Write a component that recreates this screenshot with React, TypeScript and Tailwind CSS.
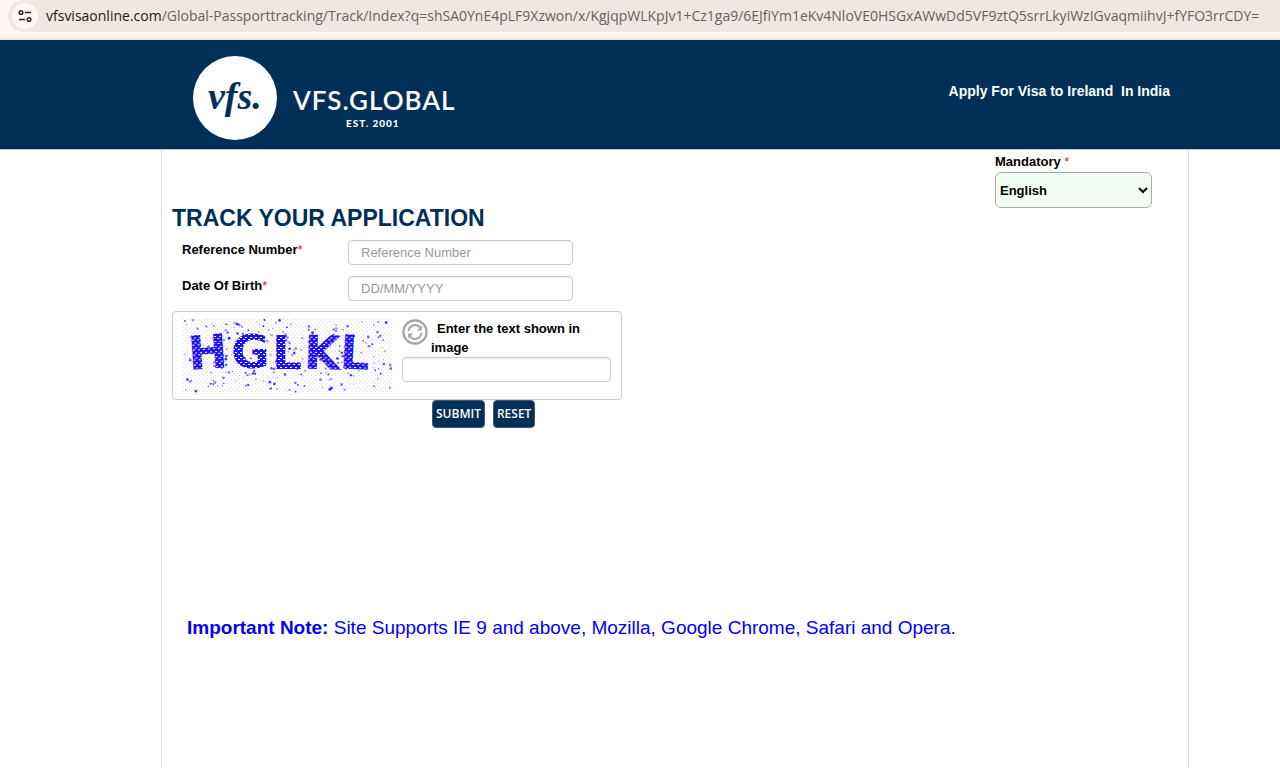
import { useState } from "react";
import type { FormEvent } from "react";

interface Speck {
    x: number;
    y: number;
    r: number;
    o: number;
}

const CAPTCHA_LETTERS = [
    { char: "H", x: 5, y: 50, rotate: -4 },
    { char: "G", x: 48, y: 49, rotate: 0 },
    { char: "L", x: 89, y: 50, rotate: 0 },
    { char: "K", x: 121, y: 50, rotate: 2 },
    { char: "L", x: 157, y: 50, rotate: 3 },
];

// fixed seed, so the noise stays the same between renders
function createSpecks(count: number): Speck[] {
    let seed = 7321;
    const next = () => {
        seed = (seed * 16807) % 2147483647;
        return seed / 2147483647;
    };
    return Array.from({ length: count }, () => ({
        x: next() * 207 + 1,
        y: next() * 72 + 1,
        r: next() * 1 + 0.5,
        o: next() * 0.7 + 0.3,
    }));
}

const specks = createSpecks(230);

function AddressBar() {
    return (
        <div className="h-10 border-b-2 border-[#f3e4da] bg-[#fff6f2] pl-2">
            <div className="flex h-8 items-center gap-2 overflow-hidden rounded-l-full bg-[#f0e7e2] pl-1 font-['Open_Sans',sans-serif] text-[14px] leading-5 whitespace-nowrap">
                <button
                    type="button"
                    aria-label="View site information"
                    className="flex h-[26px] w-[26px] shrink-0 items-center justify-center rounded-full bg-[#fff8f5]"
                >
                    <svg viewBox="0 0 14 14" className="h-[14px] w-[14px]" fill="none" stroke="#2b2623" strokeWidth="1.5">
                        <circle cx="3" cy="3.5" r="1.8" />
                        <path d="M7 3.5h6M1 10.5h6" />
                        <circle cx="11" cy="10.5" r="1.8" />
                    </svg>
                </button>
                <span className="text-[#6b605b]">
                    <span className="text-[#1f1a18]">vfsvisaonline.com</span>
                    /Global-Passporttracking/Track/Index?q=shSA0YnE4pLF9Xzwon/x/KgjqpWLKpJv1+Cz1ga9/6EJfiYm1eKv4NloVE0HSGxAWwDd5VF9ztQ5srrLkyiWzIGvaqmiihvJ+fYFO3rrCDY=
                </span>
            </div>
        </div>
    );
}

function Logo() {
    return (
        <svg viewBox="0 0 266 86" className="h-[86px] w-[266px]" role="img" aria-label="VFS.Global, est. 2001">
            <circle cx="43" cy="43" r="42" fill="#fff" />
            <text x="16" y="54" fontFamily="'Liberation Serif', serif" fontStyle="italic" fontWeight="700" fontSize="38" fill="#003057">
                vfs.
            </text>
            <text x="101" y="55" fontFamily="Lato, sans-serif" fontWeight="600" fontSize="26" letterSpacing="1" fill="#fff">
                VFS.GLOBAL
            </text>
            <text x="154" y="72" fontFamily="Lato, sans-serif" fontWeight="900" fontSize="10" letterSpacing="1" fill="#fff">
                EST. 2001
            </text>
        </svg>
    );
}

function Captcha() {
    return (
        <svg viewBox="0 0 209 74" className="h-[74px] w-[209px] shrink-0" role="img" aria-label="Captcha">
            <defs>
                <pattern id="weave" width="4" height="4" patternUnits="userSpaceOnUse">
                    <path d="M0 0h1v1h-1zM2 2h1v1h-1z" fill="#dfdfe2" />
                </pattern>
                <pattern id="mesh" width="5" height="5" patternUnits="userSpaceOnUse">
                    <rect width="5" height="5" fill="#1c12ee" />
                    <path d="M0 0h2v1h-2zM2 3h2v1h-2z" fill="#fff" />
                </pattern>
            </defs>
            <rect width="209" height="74" fill="url(#weave)" />
            {specks.map((speck, index) => (
                <circle key={index} cx={speck.x} cy={speck.y} r={speck.r} fill="#2318f0" opacity={speck.o} />
            ))}
            {CAPTCHA_LETTERS.map((letter, index) => (
                <text
                    key={index}
                    x={letter.x}
                    y={letter.y}
                    transform={`rotate(${letter.rotate} ${letter.x + 15} 32)`}
                    fontFamily="'DejaVu Sans', sans-serif"
                    fontWeight="700"
                    fontSize="47"
                    fill="url(#mesh)"
                >
                    {letter.char}
                </text>
            ))}
        </svg>
    );
}

function RefreshIcon() {
    return (
        <svg viewBox="0 0 26 26" className="h-[26px] w-[26px]" fill="none" stroke="#a3a3a3">
            <circle cx="13" cy="13" r="11.6" strokeWidth="2.2" />
            <path d="M6.5 12a6.6 6.6 0 0 1 11.5-3.6M19.5 14a6.6 6.6 0 0 1-11.5 3.6" strokeWidth="2" />
            <path d="M19.8 6.5v5h-5zM6.2 19.5v-5h5z" fill="#a3a3a3" stroke="none" />
        </svg>
    );
}

const inputClass =
    "h-[25px] rounded-[4px] border border-[#ccc] bg-white px-3 text-[13px] text-[#555] shadow-[inset_0_1px_1px_rgba(0,0,0,0.075)] placeholder:text-[#999] focus:outline-none";

const buttonClass =
    "h-7 rounded-[4px] border border-[#47586b] bg-[#003057] px-[3px] font-['Open_Sans',sans-serif] text-[12px] font-semibold text-white";

export default function App() {
    const [language, setLanguage] = useState("en");
    const [reference, setReference] = useState("");
    const [birthDate, setBirthDate] = useState("");
    const [captcha, setCaptcha] = useState("");

    const handleSubmit = (event: FormEvent) => event.preventDefault();

    const handleReset = () => {
        setReference("");
        setBirthDate("");
        setCaptcha("");
    };

    return (
        <div className="flex min-h-screen flex-col bg-white font-['Liberation_Sans',Arial,sans-serif] text-[13px] text-black">
            <AddressBar />

            <header className="flex justify-between border-b border-[#b9c6d2] bg-[#003057] pt-[15px] pr-[110px] pb-2 pl-48">
                <Logo />
                <p className="pt-[26px] text-[14px] leading-5 font-bold whitespace-pre text-white">
                    Apply For Visa to Ireland  In India
                </p>
            </header>

            <main className="mr-[91px] ml-[161px] grow border-x border-[#ddd] px-[10px]">
                <div className="flex justify-end pt-[2px] pr-[26px]">
                    <div className="w-[157px]">
                        <label htmlFor="language" className="mb-px block leading-[19px] font-bold">
                            Mandatory <span className="font-normal text-[#c9302c]">*</span>
                        </label>
                        <select
                            id="language"
                            value={language}
                            onChange={(event) => setLanguage(event.target.value)}
                            className="h-9 w-full rounded-md border border-[#aaa] bg-[#f2fdf5] font-bold"
                        >
                            <option value="en">English</option>
                        </select>
                    </div>
                </div>

                <form onSubmit={handleSubmit} onReset={handleReset} className="max-w-[450px]">
                    <h1 className="mt-[-4px] text-[23px] leading-7 font-bold text-[#003057]">TRACK YOUR APPLICATION</h1>

                    <div className="mt-2 flex pl-[10px]">
                        <label htmlFor="reference" className="w-[166px] leading-[19px] font-bold">
                            Reference Number<span className="font-normal text-[#c9302c]">*</span>
                        </label>
                        <input
                            id="reference"
                            value={reference}
                            onChange={(event) => setReference(event.target.value)}
                            placeholder="Reference Number"
                            className={`${inputClass} w-[225px]`}
                        />
                    </div>

                    <div className="mt-[11px] flex pl-[10px]">
                        <label htmlFor="birth" className="w-[166px] leading-[19px] font-bold">
                            Date Of Birth<span className="font-normal text-[#c9302c]">*</span>
                        </label>
                        <input
                            id="birth"
                            value={birthDate}
                            onChange={(event) => setBirthDate(event.target.value)}
                            placeholder="DD/MM/YYYY"
                            className={`${inputClass} w-[225px]`}
                        />
                    </div>

                    <div className="mt-[10px] flex h-[89px] gap-[10px] rounded-[4px] border border-[#ccc] px-[10px] pt-[7px]">
                        <Captcha />
                        <div className="w-[209px]">
                            <div className="flex gap-[3px]">
                                <button type="button" aria-label="Refresh captcha" className="h-[26px] w-[26px] shrink-0">
                                    <RefreshIcon />
                                </button>
                                <label htmlFor="captcha" className="indent-[6px] leading-[19px] font-bold">
                                    Enter the text shown in image
                                </label>
                            </div>
                            <input
                                id="captcha"
                                value={captcha}
                                onChange={(event) => setCaptcha(event.target.value)}
                                className={`${inputClass} w-full`}
                            />
                        </div>
                    </div>

                    <div className="flex gap-2 pl-[260px]">
                        <button type="submit" className={buttonClass}>
                            SUBMIT
                        </button>
                        <button type="reset" className={buttonClass}>
                            RESET
                        </button>
                    </div>
                </form>

                <p className="mt-[186px] pl-[15px] text-[19px] leading-7 text-[#0000ff]">
                    <strong>Important Note:</strong> Site Supports IE 9 and above, Mozilla, Google Chrome, Safari and Opera.
                </p>
            </main>
        </div>
    );
}
